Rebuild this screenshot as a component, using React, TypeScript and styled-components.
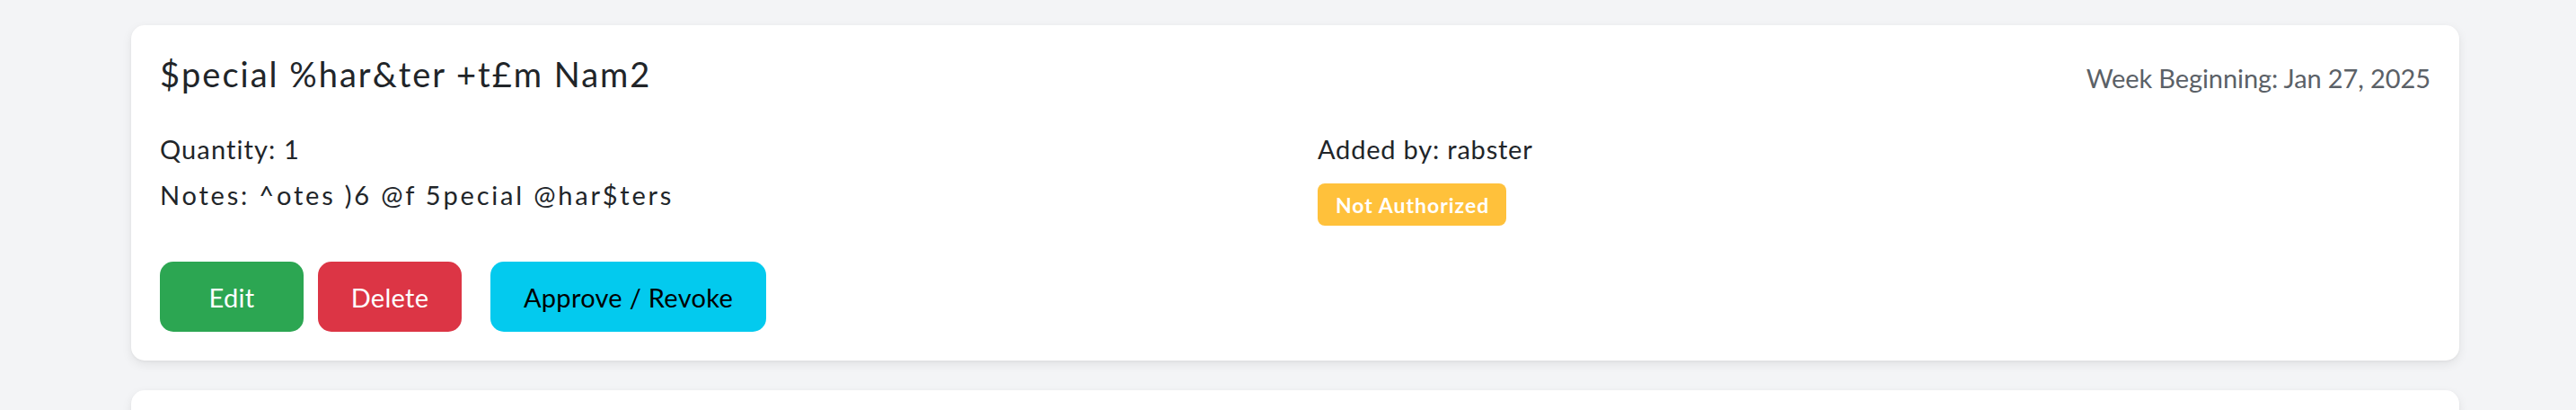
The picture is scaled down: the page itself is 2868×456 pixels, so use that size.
import React from "react";
import styled, { createGlobalStyle } from "styled-components";

const GlobalStyle = createGlobalStyle`
  html, body {
    margin: 0;
    padding: 0;
    background: #f3f4f6;
  }
  body {
    font-family: Lato, "Noto Sans", "Open Sans", sans-serif;
    color: #212529;
  }
  * { box-sizing: border-box; }
`;

const Page = styled.div`
  padding: 28px 130px 0 146px;
  display: flex;
  flex-direction: column;
  gap: 33px;
`;

const Card = styled.div`
  background: #ffffff;
  border-radius: 15px;
  box-shadow: 0 4px 12px rgba(0, 0, 0, 0.08), 0 1px 3px rgba(0, 0, 0, 0.04);
  padding: 32px;
`;

const TitleRow = styled.div`
  display: flex;
  justify-content: space-between;
  align-items: center;
  height: 44px;
  margin-bottom: 40px;
`;

const Title = styled.h5`
  margin: 0;
  font-size: 38px;
  font-weight: 400;
  line-height: 44px;
  color: #212529;
  letter-spacing: 2px;
`;

const WeekText = styled.span`
  font-size: 29px;
  line-height: 44px;
  color: #5b6167;
  margin-top: 10px;
  letter-spacing: -0.1px;
`;

const Details = styled.div`
  display: grid;
  grid-template-columns: 1fr 1fr;
  column-gap: 50px;
`;

const Column = styled.div`
  display: flex;
  flex-direction: column;
  align-items: flex-start;
`;

const Field = styled.p<{ $spacing: number }>`
  margin: 0 0 7px;
  font-size: 29px;
  line-height: 44px;
  letter-spacing: ${(p) => p.$spacing}px;
`;

const Badge = styled.span`
  display: inline-flex;
  align-items: center;
  justify-content: center;
  margin-top: 9px;
  height: 47px;
  padding: 0 19px 0 20px;
  background: #ffc13b;
  color: #ffffff;
  font-size: 23px;
  font-weight: 700;
  letter-spacing: 1px;
  border-radius: 8px;
`;

const ButtonRow = styled.div`
  display: flex;
  align-items: center;
  margin-top: 40px;
`;

const Button = styled.button<{ $bg: string; $fg: string; $width: number; $gapAfter: number }>`
  width: ${(p) => p.$width}px;
  height: 78px;
  margin-right: ${(p) => p.$gapAfter}px;
  border: none;
  border-radius: 15px;
  background: ${(p) => p.$bg};
  color: ${(p) => p.$fg};
  font-family: Lato, "Noto Sans", sans-serif;
  font-size: 29px;
  font-weight: 400;
  letter-spacing: 0.3px;
  cursor: pointer;
  padding: 0;
`;

type Item = {
  name: string;
  week: string;
  quantity: number;
  notes: string;
  addedBy: string;
  status: string;
};

const items: Item[] = [
  {
    name: "$pecial %har&ter +t£m Nam2",
    week: "Jan 27, 2025",
    quantity: 1,
    notes: "^otes )6 @f 5pecial @har$ters",
    addedBy: "rabster",
    status: "Not Authorized",
  },
  {
    name: "Test Item",
    week: "Jan 27, 2025",
    quantity: 2,
    notes: "None",
    addedBy: "rabster",
    status: "Not Authorized",
  },
];

function ItemCard({ item }: { item: Item }) {
  return (
    <Card>
      <TitleRow>
        <Title>{item.name}</Title>
        <WeekText>Week Beginning: {item.week}</WeekText>
      </TitleRow>
      <Details>
        <Column>
          <Field $spacing={1.1}>Quantity: {item.quantity}</Field>
          <Field $spacing={2.8}>Notes: {item.notes}</Field>
        </Column>
        <Column>
          <Field $spacing={0.8}>Added by: {item.addedBy}</Field>
          <Badge>{item.status}</Badge>
        </Column>
      </Details>
      <ButtonRow>
        <Button $bg="#2ca652" $fg="#ffffff" $width={160} $gapAfter={16}>
          Edit
        </Button>
        <Button $bg="#dc3545" $fg="#ffffff" $width={160} $gapAfter={32}>
          Delete
        </Button>
        <Button $bg="#03caee" $fg="#000000" $width={307} $gapAfter={0}>
          Approve / Revoke
        </Button>
      </ButtonRow>
    </Card>
  );
}

export default function App() {
  return (
    <>
      <GlobalStyle />
      <Page>
        {items.map((it, i) => (
          <ItemCard key={i} item={it} />
        ))}
      </Page>
    </>
  );
}
